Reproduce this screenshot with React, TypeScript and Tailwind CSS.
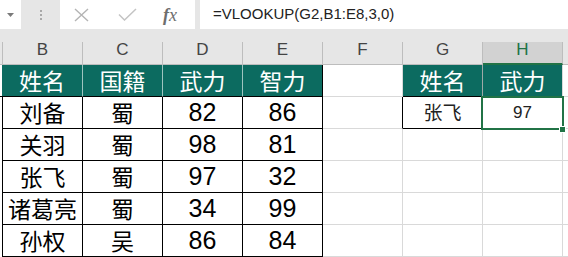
import React from "react";

const cjk = "font-['Noto_Sans_CJK_SC',sans-serif]";
const num = "font-['Liberation_Sans',sans-serif]";

const people = [
  ["刘备", "蜀", "82", "86"],
  ["关羽", "蜀", "98", "81"],
  ["张飞", "蜀", "97", "32"],
  ["诸葛亮", "蜀", "34", "99"],
  ["孙权", "吴", "86", "84"],
];

const cols = ["B", "C", "D", "E", "F", "G", "H"];

export default function App() {
  return (
    <div className="w-[568px] h-[257px] overflow-hidden bg-white relative">
      {/* Formula bar */}
      <div className="h-[42px] bg-[#e6e6e6]">
        <div className="flex h-[29px]">
          <div className="w-[21px] bg-white flex items-center justify-center">
            <svg width="7" height="4" viewBox="0 0 7 4">
              <path d="M0 0h7L3.5 4z" fill="#7a7a7a" />
            </svg>
          </div>
          <div className="w-[39px] flex flex-col items-center justify-center gap-[2px]">
            <span className="w-[2px] h-[2px] bg-[#a8a8a8]" />
            <span className="w-[2px] h-[2px] bg-[#a8a8a8]" />
            <span className="w-[2px] h-[2px] bg-[#a8a8a8]" />
          </div>
          <div className="w-[135px] bg-white flex items-center">
            <svg width="15" height="14" viewBox="0 0 15 14" className="ml-[14px]">
              <path d="M1 1l13 12M14 1L1 13" stroke="#b4b4b4" strokeWidth="1.4" fill="none" />
            </svg>
            <svg width="19" height="13" viewBox="0 0 19 13" className="ml-[29px]">
              <path d="M1 6.5l5.5 5.5L18 1" stroke="#c4c4c4" strokeWidth="1.5" fill="none" />
            </svg>
            <span className="ml-[26px] text-[#6e6e6e] text-[18px] italic font-['Liberation_Serif',serif] leading-none">
              <span className="font-bold">f</span>x
            </span>
          </div>
          <div className="w-[5px]" />
          <div className="flex-1 bg-white flex items-center pl-[13px] text-[15px] text-[#222] font-['Liberation_Sans',sans-serif]">
            =VLOOKUP(G2,B1:E8,3,0)
          </div>
        </div>
      </div>

      {/* Column headers */}
      <div className="flex h-[23px] bg-[#e6e6e6] font-['Liberation_Sans',sans-serif] text-[17px]">
        <div className="w-[2px] border-b border-[#bdbdbd]" />
        {cols.map((c, i) => (
          <div
            key={c}
            className={
              c === "H"
                ? "w-[80px] bg-[#d2d2d2] border-r border-[#bdbdbd] border-b-2 border-b-[#217346] text-[#217346] flex items-end justify-center pb-[1px]"
                : i === 0
                ? "w-[81px] border-l border-r border-b border-[#bdbdbd] text-[#444] flex items-end justify-center pb-[2px]"
                : "w-[80px] border-r border-b border-[#bdbdbd] text-[#444] flex items-end justify-center pb-[2px]"
            }
          >
            {c}
          </div>
        ))}
        <div className="flex-1 border-b border-[#bdbdbd]" />
      </div>

      {/* Row 1: table headers */}
      <div className={`flex h-[32px] text-[23px] text-white ${cjk}`}>
        <div className="w-[2px] border-b border-black" />
        <div className="w-[81px] bg-[#0c6b60] border-r border-[#9fc4bf] border-b border-b-black flex items-center justify-center">姓名</div>
        <div className="w-[80px] bg-[#0c6b60] border-r border-[#9fc4bf] border-b border-b-black flex items-center justify-center">国籍</div>
        <div className="w-[80px] bg-[#0c6b60] border-r border-[#9fc4bf] border-b border-b-black flex items-center justify-center">武力</div>
        <div className="w-[80px] bg-[#0c6b60] border-r border-black border-b border-b-black flex items-center justify-center">智力</div>
        <div className="w-[80px] border-r border-b border-[#d9d9d9]" />
        <div className="w-[80px] bg-[#0c6b60] border-r border-[#9fa9a7] border-b border-b-black flex items-center justify-center">姓名</div>
        <div className="w-[80px] bg-[#0c6b60] border-r border-[#d9d9d9] border-b border-b-[#217346] flex items-center justify-center">武力</div>
        <div className="flex-1 border-b border-[#d9d9d9]" />
      </div>

      {/* Data rows */}
      {people.map((p, i) => (
        <div key={p[0]} className="flex h-[32px] text-black">
          <div className="w-[2px]" />
          <div className={`w-[81px] border-l border-r border-b border-black flex items-center justify-center text-[23px] ${cjk}`}>{p[0]}</div>
          <div className={`w-[80px] border-r border-b border-black flex items-center justify-center text-[23px] ${cjk}`}>{p[1]}</div>
          <div className={`w-[80px] border-r border-b border-black flex items-center justify-center text-[25px] ${num}`}>{p[2]}</div>
          <div className={`w-[80px] border-r border-b border-black flex items-center justify-center text-[25px] ${num}`}>{p[3]}</div>
          {i === 0 ? (
            <>
              <div className="w-[80px] border-r border-black border-b border-b-[#d9d9d9]" />
              <div className={`w-[80px] border-r border-b border-black flex items-center justify-center text-[19px] text-[#222] ${cjk}`}>张飞</div>
              <div className={`w-[80px] border-r border-b border-[#d9d9d9] flex items-center justify-center text-[17px] text-[#222] ${num}`}>97</div>
            </>
          ) : (
            <>
              <div className="w-[80px] border-r border-b border-[#d9d9d9]" />
              <div className="w-[80px] border-r border-b border-[#d9d9d9]" />
              <div className="w-[80px] border-r border-b border-[#d9d9d9]" />
            </>
          )}
          <div className="flex-1 border-b border-[#d9d9d9]" />
        </div>
      ))}

      {/* Active cell H2 */}
      <div className="absolute left-[481px] top-[96px] w-[83px] h-[34px] border-2 border-[#217346]" />
      <div className="absolute left-[559px] top-[126px] w-[7px] h-[7px] bg-[#217346] border border-white" />
    </div>
  );
}
